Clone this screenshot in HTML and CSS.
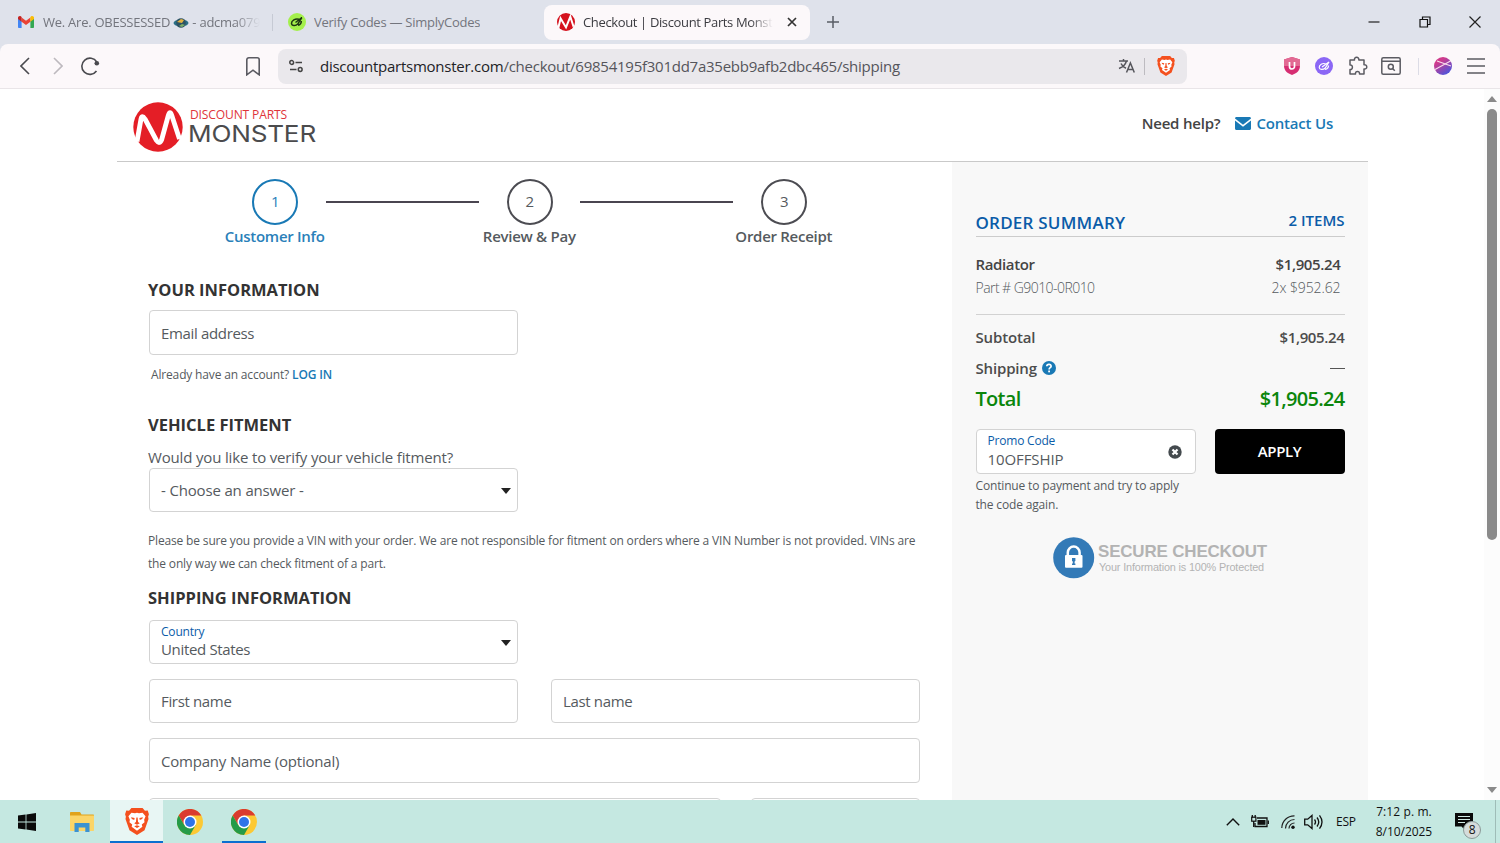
FILE: index.html
```html
<!DOCTYPE html>
<html lang="en">
<head>
  <meta charset="UTF-8" />
  <meta name="viewport" content="width=device-width, initial-scale=1.0"/>
  <title>Checkout | Discount Parts Monster</title>
  <link rel="stylesheet" href="styles.css">
</head>
<body>
  <!-- Tab strip -->
  <div class="tab-strip">
    <div class="tab tab-mail">
      <svg class="tab-icon" viewBox="0 0 16 16">
        <path d="M0 4v9.2c0 .5.4.8.8.8H3.600V6.800z" fill="#4285f4"/>
        <path d="M16 4v9.200c0 .5-.4.8-.8.8h-2.800V6.800z" fill="#34a853"/>
        <path d="M3.600 3.500v4.200L8 11l4.400-3.300V3.500L8 6.800z" fill="#ea4335"/>
        <path d="M0 4c0-1.700 1.800-2.400 3-1.500l.6.5v4.700L0 5z" fill="#c5221f"/>
        <path d="M16 4c0-1.700-1.800-2.400-3-1.500l-.6.5v4.700L16 5z" fill="#fbbc04"/>
      </svg>
      <span class="tab-title fade">We. Are. OBESSESSED
        <svg class="planet" viewBox="0 0 16 12"><ellipse cx="8" cy="6" rx="7.500" ry="3.500" fill="#2b6f86"/><circle cx="8" cy="6" r="4.800" fill="#2d5364"/><path d="M4 5l4-3 3 1-2 3z" fill="#e3b341"/><path d="M6 9l3-2 3 1-3 2z" fill="#7fb069"/></svg>
        - adcma0799</span>
    </div>
    <div class="tab tab-codes">
      <svg class="tab-icon big" viewBox="0 0 18 18">
        <circle cx="9" cy="9" r="9" fill="#a4f04c"/>
        <path d="M10.800 6.300C7.500 5 3.300 7.800 3.500 10.500c.3 2.500 4.300 2.500 6.300.5l4-6.500-6.300 5M10 12.300c2.300-.5 3.300-2.800 3.300-4.300" fill="none" stroke="#1d3512" stroke-width="1.500"/>
      </svg>
      <span class="tab-title">Verify Codes — SimplyCodes</span>
    </div>
    <div class="tab active">
      <svg class="tab-icon big" viewBox="0 0 50 50">
        <circle cx="25" cy="25" r="25" fill="#d5121e"/>
        <path d="M4 40L10 15l15 25L37 10l9 28" fill="none" stroke="#fff" stroke-width="5.500"/>
      </svg>
      <span class="tab-title fade">Checkout | Discount Parts Monster</span>
      <svg class="tab-close" viewBox="0 0 10 10"><path d="M1 1l8 8M9 1L1 9" stroke="#333" stroke-width="1.700"/></svg>
    </div>
    <svg class="tab-new" viewBox="0 0 12 12"><path d="M6 0v12M0 6h12" stroke="#5a5d66" stroke-width="1.500"/></svg>
    <div class="window-controls">
      <svg viewBox="0 0 12 12"><path d="M0.500 6h11" stroke="#222" stroke-width="1.200"/></svg>
      <svg viewBox="0 0 12 12"><path d="M1 3.500h7.500V11H1zM3.500 3.500V1H11v7.500H8.500" fill="none" stroke="#111" stroke-width="1.200"/></svg>
      <svg viewBox="0 0 12 12"><path d="M.5.5l11 11M11.500.5l-11 11" stroke="#222" stroke-width="1.200"/></svg>
    </div>
  </div>

  <!-- Toolbar -->
  <div class="toolbar">
    <div class="nav-buttons">
      <svg width="10" height="18" viewBox="0 0 10 18"><path d="M9 1L1 9l8 8" fill="none" stroke="#4a4a4f" stroke-width="1.600"/></svg>
      <svg width="10" height="18" viewBox="0 0 10 18"><path d="M1 1l8 8-8 8" fill="none" stroke="#bdb9be" stroke-width="1.600"/></svg>
      <svg width="20" height="20" viewBox="0 0 20 20"><path d="M16.500 15a8.100 8.100 0 1 1 .3-9" fill="none" stroke="#4a4a4f" stroke-width="1.600"/><circle cx="16.800" cy="7.200" r="2.300" fill="#4a4a4f"/></svg>
    </div>
    <svg class="bookmark" viewBox="0 0 14 19"><path d="M.8 2.800a2 2 0 0 1 2-2h8.400a2 2 0 0 1 2 2v15L7 13.200.8 17.800z" fill="none" stroke="#5b5b62" stroke-width="1.600"/></svg>
    <div class="address-bar">
      <svg class="site-info" viewBox="0 0 14 14"><path d="M6.500 3.500H13M1 10.500h6.500" stroke="#444" stroke-width="1.600"/><circle cx="2.700" cy="3.500" r="1.900" fill="none" stroke="#444" stroke-width="1.500"/><circle cx="11.200" cy="10.500" r="1.900" fill="none" stroke="#444" stroke-width="1.500"/></svg>
      <span class="url"><b>discountpartsmonster.com</b>/checkout/69854195f301dd7a35ebb9afb2dbc465/shipping</span>
      <svg class="translate" viewBox="0 0 17 16"><path d="M1 3h9M5.500 1v2M8.500 3c-1 3.500-3.500 6-7.500 7.500M3 5.500c1 2.200 2.800 3.800 5 4.800M8.500 14.500L12.400 5l3.900 9.500M9.800 11.500h5.200" fill="none" stroke="#56565c" stroke-width="1.500"/></svg>
      <span class="divider"></span>
      <svg class="brave" viewBox="0 0 30 34"><use href="#lion"/></svg>
    </div>
    <div class="extensions">
      <svg width="16" height="18" viewBox="0 0 16 18"><path d="M8 0l8 2.500V9c0 4.500-3.500 7.500-8 9-4.500-1.500-8-4.500-8-9V2.500z" fill="#d62e72"/><path d="M8 0l8 2.500V9H0V2.500z" fill="#e26a93"/><path d="M5.500 5v4.500a2.500 2.500 0 0 0 5 0V5" fill="none" stroke="#fff" stroke-width="1.700"/></svg>
      <svg width="18" height="18" viewBox="0 0 18 18"><circle cx="9" cy="9" r="9" fill="#8b67f5"/><path d="M11 7C7.500 5.500 4 8 4.200 10.500c.3 2.300 3.800 2.500 6 .5l3.800-6-7 5M10 12.500c2.500-.5 3.500-2.500 3.500-4" fill="none" stroke="#fff" stroke-width="1.200"/></svg>
      <svg width="20" height="20" viewBox="0 0 20 20"><path d="M2 4h4.500c-.8-3.700 5-3.700 4.300 0H16v4.800c3.700-.8 3.700 5 0 4.200V18h-4.500c.5-3.500-4.500-3.500-4 0H2v-4.500c3.200.5 3.200-5 0-4.500z" fill="none" stroke="#5b5b62" stroke-width="1.500" stroke-linejoin="round"/></svg>
      <svg class="page-search" width="20" height="18" viewBox="0 0 20 18"><rect x=".8" y=".8" width="18.400" height="16.400" rx="1.500" fill="none" stroke="#5b5b62" stroke-width="1.500"/><path d="M1 4.200h18M11.500 11.500l2.300 2.300" stroke="#5b5b62" stroke-width="1.500"/><circle cx="9.800" cy="9.800" r="2.500" fill="none" stroke="#5b5b62" stroke-width="1.500"/></svg>
      <span class="divider light"></span>
      <svg width="18" height="18" viewBox="0 0 18 18"><defs><linearGradient id="orb" x1="0" y1="0" x2=".7" y2="1"><stop offset=".3" stop-color="#cf3a8c"/><stop offset="1" stop-color="#4a55dd"/></linearGradient></defs><circle cx="9" cy="9" r="9" fill="url(#orb)"/><path d="M1 12.500L16.500 4M3 4l14 5" stroke="#fbdcec" stroke-width="1.100"/></svg>
      <svg width="18" height="16" viewBox="0 0 18 16"><path d="M0 1h18M0 8h18M0 15h18" stroke="#5b5b62" stroke-width="1.600"/></svg>
    </div>
  </div>

  <!-- Checkout page -->
  <div class="viewport">
    <div class="page">
      <header class="site-header">
        <svg class="logo" viewBox="0 0 186 52">
          <circle cx="25" cy="25" r="24.700" fill="#e41e26"/>
          <path d="M4 39.500L8 17Q9 12.500 12 17L23.500 38.500Q26.500 43 28.700 37.500L35.300 13.500Q37 8 38.800 13.500L46.500 37" fill="none" stroke="#fff" stroke-width="4.800" stroke-linejoin="round"/>
          <text class="logo-top" x="57" y="17.200" textLength="97" lengthAdjust="spacingAndGlyphs">DISCOUNT PARTS</text>
          <text class="logo-main" x="55" y="40.300" textLength="128" lengthAdjust="spacingAndGlyphs">MONSTER</text>
        </svg>
        <div class="help">
          <span>Need help?</span>
          <svg viewBox="0 0 16 13"><path d="M0 1.500C0 .6.600 0 1.500 0h13c.9 0 1.500.6 1.500 1.500L8 7.800z" fill="#1979b5"/><path d="M0 3.400l8 6.300 8-6.300V11.500c0 .9-.6 1.500-1.500 1.500h-13C.6 13 0 12.400 0 11.500z" fill="#1979b5"/></svg>
          <a>Contact Us</a>
        </div>
      </header>

      <div class="columns">
        <main class="checkout">
          <div class="steps">
            <div class="step current"><span class="num">1</span><span class="label">Customer Info</span></div>
            <div class="line"></div>
            <div class="step"><span class="num">2</span><span class="label">Review &amp; Pay</span></div>
            <div class="line"></div>
            <div class="step"><span class="num">3</span><span class="label">Order Receipt</span></div>
          </div>

          <h2 class="h-your">YOUR INFORMATION</h2>
          <div class="field half tall">Email address</div>
          <p class="login">Already have an account? <a>LOG IN</a></p>

          <h2 class="h-vehicle">VEHICLE FITMENT</h2>
          <p class="question">Would you like to verify your vehicle fitment?</p>
          <div class="field half select answer">- Choose an answer -</div>
          <p class="note">Please be sure you provide a VIN with your order. We are not responsible for fitment on orders where a VIN Number is not provided. VINs are<br>the only way we can check fitment of a part.</p>

          <h2 class="h-shipping">SHIPPING INFORMATION</h2>
          <div class="form-rows">
            <div class="field half select labelled"><small>Country</small><span>United States</span></div>
            <div class="row">
              <div class="field">First name</div>
              <div class="field">Last name</div>
            </div>
            <div class="field tall company">Company Name (optional)</div>
            <div class="row address">
              <div class="field street"></div>
              <div class="field"></div>
            </div>
          </div>
        </main>

        <aside class="summary">
          <div class="summary-head"><h3>ORDER SUMMARY</h3><span>2 ITEMS</span></div>
          <div class="item">
            <div class="item-row name"><span>Radiator</span><span>$1,905.24</span></div>
            <div class="item-row part"><span class="sku">Part # G9010-0R010</span><span>2x $952.62</span></div>
          </div>
          <div class="cost"><span>Subtotal</span><span class="amount">$1,905.24</span></div>
          <div class="cost">
            <span>Shipping <svg class="tip" viewBox="0 0 14 14"><circle cx="7" cy="7" r="7" fill="#1979b5"/><path d="M4.800 5.300C5 2.600 9.300 2.900 9.100 5.400 9 6.700 7.100 6.700 7.100 8.400" fill="none" stroke="#fff" stroke-width="1.700"/><rect x="6.200" y="9.500" width="1.800" height="1.800" fill="#fff"/></svg></span>
            <span class="dash"></span>
          </div>
          <div class="cost total"><span>Total</span><span>$1,905.24</span></div>
          <div class="promo">
            <div class="field labelled code"><small>Promo Code</small><span>10OFFSHIP</span>
              <svg class="clear" viewBox="0 0 14 14"><circle cx="7" cy="7" r="6.700" fill="#444a4e"/><path d="M4.500 4.500l5 5M9.500 4.500l-5 5" stroke="#fff" stroke-width="2.200"/></svg>
            </div>
            <button class="apply">APPLY</button>
          </div>
          <p class="promo-msg">Continue to payment and try to apply<br>the code again.</p>
          <svg class="secure" viewBox="0 0 216 42">
            <circle cx="20.700" cy="20.700" r="20.500" fill="#337ab7"/>
            <path d="M14.800 20v-4.500a5.900 5.900 0 0 1 11.800 0V20" fill="none" stroke="#fff" stroke-width="2.500"/>
            <rect x="12" y="18" width="17.500" height="12.800" rx="1" fill="#fff"/>
            <path d="M19 21h3.400v3l-.8.500v2h.8V28H19v-1.500h.8v-2L19 24z" fill="#337ab7"/>
            <text class="secure-top" x="45" y="20" textLength="169" lengthAdjust="spacingAndGlyphs">SECURE CHECKOUT</text>
            <text class="secure-sub" x="46" y="34" textLength="165" lengthAdjust="spacingAndGlyphs">Your Information is 100% Protected</text>
          </svg>
        </aside>
      </div>
    </div>
    <div class="scrollbar">
      <svg viewBox="0 0 10 6"><path d="M0 6l5-6 5 6z" fill="#8a8a8a"/></svg>
      <span class="thumb"></span>
      <svg class="down" viewBox="0 0 10 6"><path d="M0 0l5 6 5-6z" fill="#8a8a8a"/></svg>
    </div>
  </div>

  <!-- Taskbar -->
  <div class="taskbar">
    <div class="app start"><svg width="18" height="18" viewBox="0 0 18 18"><path d="M0 2.600l7.600-1v7H0zM8.400 1.400L18 0v8.600H8.400zM0 9.400h7.600v7L0 15.400zM8.400 9.400H18V18l-9.600-1.400z" fill="#0a0a0a"/></svg></div>
    <div class="app files"><svg width="24" height="20" viewBox="0 0 24 20"><path d="M0 1c0-.6.400-1 1-1h9l1.500 2.500H23c.6 0 1 .4 1 1V18H0z" fill="#e0a31c"/><path d="M0 3.500h24V18c0 .6-.4 1-1 1H1c-.6 0-1-.4-1-1z" fill="#fbd568"/><path d="M4.500 11h15v9h-4.200v-4.500H8.700V20H4.500z" fill="#3b92d1"/></svg></div>
    <div class="app focused"><svg width="24" height="27" viewBox="0 0 30 34">
      <g id="lion">
        <path d="M8 0h14l3 3.500 3.500-.3L30 8l-1 3 .5 3-5 14-9.500 6-9.500-6-5-14L1 11 0 8l1.500-4.800 3.500.3z" fill="#f4501e"/>
        <path d="M8 6l4.500.7 2.500-.8 2.500.8L22 6l3.800 4.500-1.800 4.300.5 3-3.500 3 .8 2.800L15 28.500l-6.800-4.900.8-2.800-3.500-3 .5-3-1.800-4.300z" fill="#fff"/>
        <path d="M7.500 11.500l4.500 1-.5 2.500-3-1.200zM22.500 11.500l-4.500 1 .5 2.500 3-1.200zM14.200 12h1.600l.5 5.500 2.200 1.800-3.500 1.700-3.500-1.700 2.200-1.800zM11.500 23l3.500-1.200 3.500 1.200-3.500 2.200z" fill="#f4501e"/>
      </g>
    </svg></div>
    <div class="app"><svg width="26" height="26" viewBox="0 0 26 26">
      <g id="chrome">
        <circle cx="13" cy="13" r="13" fill="#fcc934"/>
        <path d="M1.700 6.500A13 13 0 0 1 24.300 6.500H13L7.300 16z" fill="#da3b2f"/>
        <path d="M1.700 6.500L7.400 16.200l11.200.1L13 26A13 13 0 0 1 1.700 6.500z" fill="#259b48"/>
        <circle cx="13" cy="13" r="6.500" fill="#fff"/>
        <circle cx="13" cy="13" r="5" fill="#2f73e8"/>
      </g>
    </svg></div>
    <div class="app running"><svg width="26" height="26" viewBox="0 0 26 26"><use href="#chrome"/></svg></div>

    <div class="tray">
      <svg class="chevron" width="14" height="8" viewBox="0 0 14 8"><path d="M.8 7.200L7 1l6.200 6.200" fill="none" stroke="#111" stroke-width="1.400"/></svg>
      <svg class="battery" width="18" height="13" viewBox="0 0 18 13"><path d="M6 3h10v8.500H4V8" fill="none" stroke="#111" stroke-width="1.300"/><rect x="6.500" y="5" width="8" height="4.800" fill="#111"/><path d="M17.300 5.500v3.500M1.300 0v2.500M4.200 0v2.500M2.700 6v6" stroke="#111" stroke-width="1.300"/><rect x=".7" y="2.200" width="4.200" height="4" fill="none" stroke="#111" stroke-width="1.200"/></svg>
      <svg class="wifi" width="14" height="14" viewBox="0 0 14 14"><path d="M.8 13A12.400 12.400 0 0 1 13.500.8M4.500 13.500a9 9 0 0 1 9-9M8 13.500A5.500 5.500 0 0 1 13.500 8" fill="none" stroke="#222" stroke-width="1.200"/><circle cx="12" cy="12.200" r="1.700" fill="#111"/></svg>
      <svg class="sound" width="19" height="16" viewBox="0 0 19 16"><path d="M.7 5.200h3L8 1.500v13l-4.300-3.700h-3zM10.500 5.500q2 2.500 0 5M13 3.500q3.500 4.500 0 9M15.500 1.300q5 6.700 0 13.400" fill="none" stroke="#111" stroke-width="1.300"/></svg>
      <span class="lang">ESP</span>
      <div class="clock"><span class="time">7:12 p. m.</span><span>8/10/2025</span></div>
      <div class="notice">
        <svg width="18" height="18" viewBox="0 0 18 18"><path d="M0 0h18v13.500H9.500v3L6.500 13.500H0z" fill="#0a0a0a"/><path d="M3 3.500h12M3 6.500h12M3 9.500h7" stroke="#cfe9e4" stroke-width="1.200"/></svg>
        <span class="badge">8</span>
      </div>
      <span class="desktop-edge"></span>
    </div>
  </div>
</body>
</html>
```

FILE: styles.css
```css
:root {
  --blue: #1979b5;
  --deep-blue: #0b5ca8;
  --text: #555a5e;
  --line: #d3d3d3;
}

* {
  margin: 0;
  padding: 0;
  box-sizing: border-box;
}

body {
  width: 1500px;
  height: 843px;
  overflow: hidden;
  display: flex;
  flex-direction: column;
  background: #dfe2eb;
  font-family: "Open Sans", "Noto Sans", sans-serif;
  font-size: 15px;
  letter-spacing: -0.16px;
  color: var(--text);
}

svg {
  display: block;
  flex: none;
}

/* Tabs */
.tab-strip {
  height: 44px;
  flex: none;
  display: flex;
  align-items: center;
  padding-left: 8px;
}

.tab {
  height: 35px;
  display: flex;
  align-items: center;
  padding-left: 10px;
  font-size: 13px;
  letter-spacing: -0.25px;
  color: #73757d;
}

.tab-icon {
  width: 16px;
  height: 16px;
  margin-right: 9px;
}

.tab-icon.big {
  width: 18px;
  height: 18px;
  margin-right: 8px;
}

.tab-title {
  white-space: nowrap;
  overflow: hidden;
}

.fade {
  -webkit-mask-image: linear-gradient(90deg, #000 88%, transparent);
  mask-image: linear-gradient(90deg, #000 88%, transparent);
}

.tab-mail {
  width: 264px;
}

.tab-mail .tab-title {
  width: 217px;
}

.planet {
  display: inline-block;
  width: 16px;
  height: 12px;
  vertical-align: -2px;
}

.tab-codes {
  width: 272px;
  height: 17px;
  padding-left: 15px;
  border-left: 1px solid #c6cad4;
}

.tab.active {
  width: 266px;
  border-radius: 8px;
  background: #fcf8fa;
  color: #3b3b40;
  padding-left: 13px;
  letter-spacing: -0.36px;
}

.tab.active .tab-title {
  width: 190px;
}

.tab-close {
  width: 10px;
  height: 10px;
  margin-left: 14px;
}

.tab-new {
  width: 12px;
  height: 12px;
  margin-left: 17px;
}

.window-controls {
  display: flex;
  gap: 38.500px;
  margin-left: auto;
  margin-right: 19px;
}

.window-controls svg {
  width: 12px;
  height: 12px;
}

/* Toolbar */
.toolbar {
  height: 45px;
  flex: none;
  display: flex;
  align-items: center;
  background: #fcf8fa;
  border-bottom: 1px solid #e9e5e8;
  border-radius: 8px 8px 0 0;
}

.nav-buttons {
  display: flex;
  align-items: center;
  gap: 23px;
  padding-left: 20px;
  width: 246px;
}

.nav-buttons svg:last-child {
  margin-left: -6px;
}

.bookmark {
  width: 14px;
  height: 19px;
  margin-right: 18px;
}

.address-bar {
  width: 909px;
  height: 35px;
  border-radius: 8px;
  background: #eae8ec;
  display: flex;
  align-items: center;
  padding: 0 12px 0 11px;
}

.site-info {
  width: 14px;
  height: 14px;
  margin-right: 17px;
}

.url {
  flex: 1;
  font-size: 15px;
  letter-spacing: -0.25px;
  color: #55555b;
}

.url b {
  font-weight: 400;
  color: #222226;
}

.translate {
  width: 17px;
  height: 16px;
}

.divider {
  width: 1px;
  height: 17px;
  background: #bdbbc0;
  margin: 0 12px 0 9px;
}

.divider.light {
  background: #dcdce6;
  margin: 0;
}

.brave {
  width: 18px;
  height: 20px;
}

.extensions {
  flex: 1;
  display: flex;
  align-items: center;
  justify-content: space-between;
  padding: 0 15px 0 97px;
}

.page-search {
  margin: 0 2px 0 -2px;
}

/* Viewport */
.viewport {
  height: 711px;
  flex: none;
  display: flex;
  overflow: hidden;
  padding-left: 117px;
  justify-content: space-between;
  background: #fff;
}

.page {
  width: 1251px;
}

.site-header {
  height: 73px;
  display: flex;
  justify-content: space-between;
  border-bottom: 1px solid #c9c9c9;
  padding: 13px 35px 0 16px;
}

.logo {
  width: 186px;
  height: 52px;
}

.logo-top {
  font: 400 12px "Open Sans", sans-serif;
  fill: #e0343a;
}

.logo-main {
  font: 400 23px "Inter", sans-serif;
  fill: #4b4b4d;
}

.help {
  height: 42px;
  display: flex;
  align-items: center;
  font-weight: 600;
  font-size: 15px;
  letter-spacing: -0.2px;
  color: #444;
}

.help svg {
  width: 16px;
  height: 13px;
  margin: 0 5px 0 15px;
}

.help a {
  color: var(--blue);
}

.columns {
  display: flex;
}

/* Checkout form */
.checkout {
  width: 835px;
  padding: 17px 32px 0 31px;
}

.steps {
  display: flex;
  margin-left: 76px;
}

.step {
  width: 101.500px;
  display: flex;
  flex-direction: column;
  align-items: center;
  font-size: 15px;
}

.num {
  width: 46px;
  height: 46px;
  border: 2px solid #4c4c52;
  border-radius: 50%;
  line-height: 41px;
  text-align: center;
  margin-left: 1px;
}

.label {
  margin-top: 1px;
  line-height: 20px;
  font-weight: 600;
  letter-spacing: -0.28px;
  white-space: nowrap;
}

.current {
  color: #2a80b9;
}

.current .num {
  border-color: var(--blue);
}

.line {
  width: 153px;
  height: 2px;
  margin-top: 22px;
  background: #4a4550;
}

h2 {
  font-size: 16.500px;
  font-weight: 700;
  line-height: 24px;
  letter-spacing: 0;
  color: #333;
}

.h-your {
  margin-top: 32px;
  margin-bottom: 8px;
}

.field {
  height: 44px;
  flex: 1;
  border: 1px solid var(--line);
  border-radius: 4px;
  background: #fff;
  padding: 0 11px;
  line-height: 43px;
  letter-spacing: -0.34px;
  white-space: nowrap;
}

.field.half {
  width: 369px;
  flex: none;
}

.checkout > .field {
  margin-left: 1px;
}

.field.tall {
  height: 45px;
  flex: none;
  line-height: 45px;
}

.field.company {
  letter-spacing: -0.2px;
}

.select {
  display: flex;
  justify-content: space-between;
  align-items: center;
}

.select::after {
  content: "";
  border: 5.500px solid transparent;
  border-top: 6px solid #222;
  border-bottom: none;
  margin-right: -5px;
  margin-top: 2px;
}

.field.answer {
  line-height: 46px;
  letter-spacing: -0.16px;
}

.login {
  margin: 10px 0 0 3px;
  line-height: 20px;
  font-size: 12px;
}

.login a {
  color: var(--blue);
  font-weight: 600;
}

.h-vehicle {
  margin-top: 28px;
}

.question {
  margin-top: 10px;
  margin-bottom: 1px;
  line-height: 20px;
}

.note {
  margin-top: 17px;
  line-height: 23px;
  font-size: 12px;
  white-space: nowrap;
}

.h-shipping {
  margin-top: 11px;
  margin-bottom: 10px;
}

.form-rows {
  display: flex;
  flex-direction: column;
  gap: 15px;
  padding-left: 1px;
}

.row {
  display: flex;
  gap: 33px;
}

.row.address {
  gap: 30px;
}

.street {
  flex: 0 0 572px;
}

.labelled {
  line-height: 18px;
  position: relative;
  align-items: flex-end;
  padding-bottom: 5px;
}

.labelled small {
  position: absolute;
  left: 11px;
  top: 2px;
  font-size: 12px;
  letter-spacing: -0.2px;
  color: var(--deep-blue);
}

.labelled.select::after {
  align-self: center;
  margin-top: 6px;
}

/* Order summary */
.summary {
  width: 416px;
  height: 640px;
  background: #f8f8f8;
  padding: 47px 23.500px 0;
}

.summary-head {
  height: 28px;
  display: flex;
  justify-content: space-between;
  border-bottom: 1px solid #ccc;
  color: var(--deep-blue);
  font-weight: 600;
  letter-spacing: 0;
}

.summary-head h3 {
  font-size: 17px;
  line-height: 27px;
  font-weight: 600;
  letter-spacing: 0.22px;
}

.summary-head span {
  line-height: 23px;
}

.item {
  height: 78px;
  padding-top: 16px;
  border-bottom: 1px solid #d2d2d2;
}

.item-row {
  display: flex;
  justify-content: space-between;
  padding-right: 4px;
  line-height: 23px;
}

.name {
  font-weight: 600;
  letter-spacing: -0.36px;
  color: #444;
}

.part {
  font-size: 14px;
  font-weight: 300;
  letter-spacing: -0.1px;
}

.sku {
  letter-spacing: -0.55px;
}

.cost {
  display: flex;
  justify-content: space-between;
  align-items: center;
  height: 31px;
  font-weight: 600;
  color: #4c4c4c;
}

.amount {
  letter-spacing: -0.36px;
}

.item + .cost {
  margin-top: 6px;
}

.tip {
  display: inline-block;
  width: 14px;
  height: 14px;
  margin-left: 1px;
  vertical-align: -1px;
}

.dash {
  width: 15px;
  height: 1px;
  margin-top: 2px;
  background: #555;
}

.total {
  font-size: 20px;
  letter-spacing: -0.7px;
  color: #0b860b;
}

.promo {
  display: flex;
  gap: 19px;
  margin-top: 15px;
}

.code {
  display: flex;
  height: 45px;
  letter-spacing: -0.1px;
}

.clear {
  width: 14px;
  height: 14px;
  margin: 0 2px 9px auto;
}

.apply {
  width: 130px;
  height: 45px;
  padding-bottom: 2px;
  border: none;
  border-radius: 4px;
  background: #000;
  color: #fff;
  font: 600 15px "Open Sans", sans-serif;
  letter-spacing: -0.4px;
}

.promo-msg {
  margin-top: 3px;
  font-size: 12px;
  line-height: 18.500px;
}

.secure {
  width: 216px;
  height: 42px;
  margin: 23px 0 0 77.500px;
}

.secure-top {
  font: 700 17px "Liberation Sans", sans-serif;
  fill: #b3b3b3;
}

.secure-sub {
  font: 400 11px "Liberation Sans", sans-serif;
  fill: #b3b3b3;
}

/* Scrollbar */
.scrollbar {
  width: 16px;
  display: flex;
  flex-direction: column;
  align-items: center;
  padding: 7px 0;
  background: #fcfcfc;
}

.scrollbar svg {
  width: 10px;
  height: 6px;
}

.thumb {
  width: 10px;
  height: 431px;
  margin-top: 7px;
  border-radius: 5px;
  background: #8a8a8a;
}

.scrollbar .down {
  margin-top: auto;
}

/* Taskbar */
.taskbar {
  height: 43px;
  flex: none;
  display: flex;
  background: #c5e8e1;
  color: #111;
}

.app {
  width: 54px;
  display: flex;
  align-items: center;
  justify-content: center;
  padding-top: 2px;
  border-bottom: 2px solid transparent;
}

.files {
  width: 56px;
}

.focused {
  width: 53px;
  background: #e8f6f4;
  border-bottom-color: #0a6fd0;
}

.running {
  width: 44px;
  margin-left: 5px;
  border-bottom-color: #0a6fd0;
}

.tray {
  margin-left: auto;
  display: flex;
  align-items: center;
  font-size: 12px;
  letter-spacing: -0.2px;
}

.battery {
  margin-left: 11px;
}

.wifi {
  margin-left: 12px;
}

.sound {
  margin-left: 9px;
}

.lang {
  width: 20px;
  margin-left: 13px;
}

.clock {
  width: 58px;
  margin-left: 19px;
  display: flex;
  flex-direction: column;
  align-items: center;
  line-height: 19.500px;
  letter-spacing: -0.05px;
  white-space: nowrap;
}

.time {
  letter-spacing: 0.1px;
}

.notice {
  position: relative;
  margin-left: 22px;
}

.badge {
  position: absolute;
  left: 8px;
  top: 8px;
  width: 18px;
  height: 18px;
  border: 1px solid #8b9a98;
  border-radius: 50%;
  background: #d5dcdb;
  font-size: 12px;
  line-height: 16px;
  text-align: center;
}

.desktop-edge {
  width: 1px;
  height: 43px;
  margin: 0 4px 0 22px;
  background: #9fbcb7;
}
```
